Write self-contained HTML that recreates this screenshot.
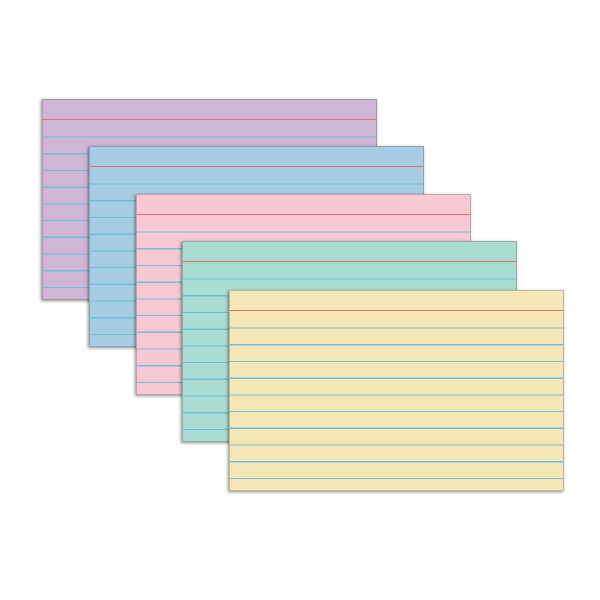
<!DOCTYPE html>
<html><head><style>
body{margin:0;width:600px;height:600px;background:#fff;position:relative;overflow:hidden}
.c{position:absolute;width:335px;height:201px;box-shadow:-1px 1px 3px rgba(0,0,0,.45);border:1px solid rgba(90,90,90,.35);box-sizing:border-box;
background-image:linear-gradient(to bottom,transparent 19px,#d9746f 19px,#d9746f 20.2px,transparent 20.2px),
repeating-linear-gradient(to bottom,transparent 0,transparent 15.5px,#6fbfd6 15.5px,#6fbfd6 16.7px);
background-size:100% 100%,100% 167px;background-position:0 0,0 21px;background-repeat:no-repeat,no-repeat}
</style></head><body>
<div class="c" style="left:42px;top:99px;background-color:#cfb6d6"></div>
<div class="c" style="left:89px;top:146px;background-color:#a6cde4"></div>
<div class="c" style="left:136px;top:194px;background-color:#f8c8d4"></div>
<div class="c" style="left:182px;top:241px;background-color:#aadcd2"></div>
<div class="c" style="left:229px;top:290px;background-color:#f6e7b9"></div>
</body></html>
